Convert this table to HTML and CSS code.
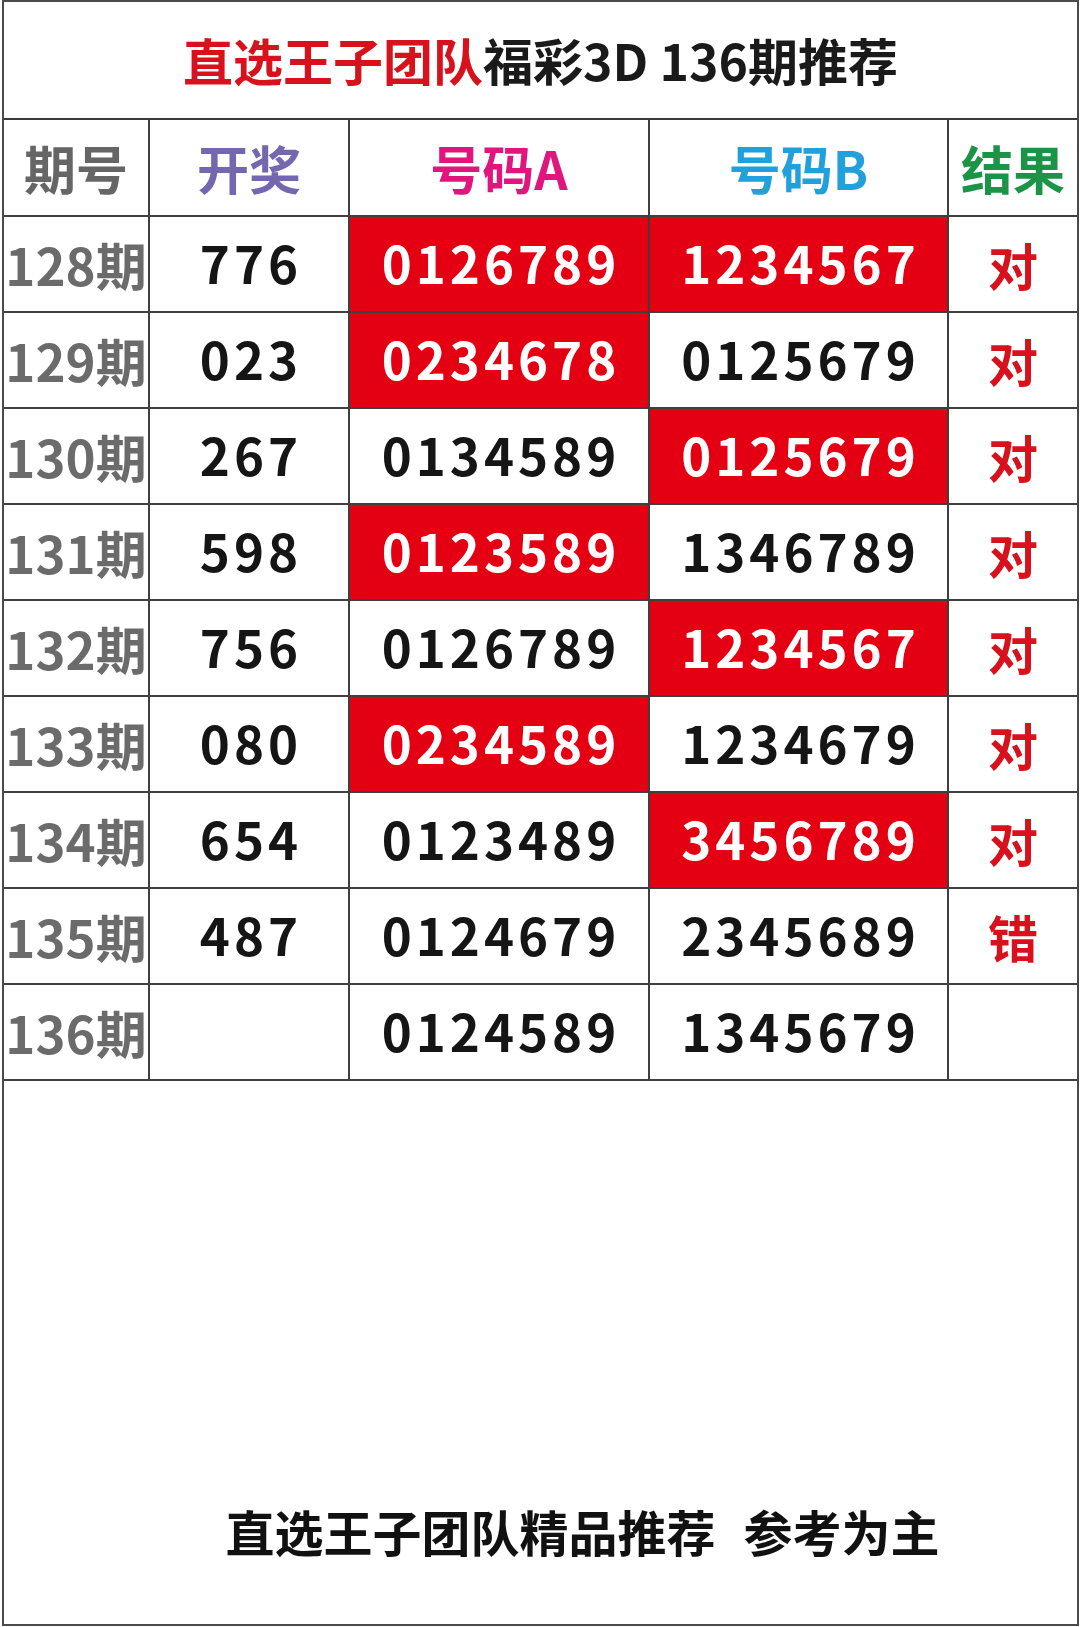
FILE: index.html
```html
<!DOCTYPE html>
<html lang="zh-CN">
<head>
<meta charset="utf-8">
<link rel="stylesheet" href="styles.css">
</head>
<body>
<div class="page">
  <div class="title"><span class="red">直选王子团队</span>福彩3D 136期推荐</div>
  <div class="grid">
    <div class="cell head c-qi">期号</div>
    <div class="cell head c-kj">开奖</div>
    <div class="cell head c-a">号码A</div>
    <div class="cell head c-b">号码B</div>
    <div class="cell head c-jg last">结果</div>

    <div class="cell qi">128期</div><div class="cell num kj">776</div><div class="cell num hit">0126789</div><div class="cell num hit">1234567</div><div class="cell res last">对</div>
    <div class="cell qi">129期</div><div class="cell num kj">023</div><div class="cell num hit">0234678</div><div class="cell num">0125679</div><div class="cell res last">对</div>
    <div class="cell qi">130期</div><div class="cell num kj">267</div><div class="cell num">0134589</div><div class="cell num hit">0125679</div><div class="cell res last">对</div>
    <div class="cell qi">131期</div><div class="cell num kj">598</div><div class="cell num hit">0123589</div><div class="cell num">1346789</div><div class="cell res last">对</div>
    <div class="cell qi">132期</div><div class="cell num kj">756</div><div class="cell num">0126789</div><div class="cell num hit">1234567</div><div class="cell res last">对</div>
    <div class="cell qi">133期</div><div class="cell num kj">080</div><div class="cell num hit">0234589</div><div class="cell num">1234679</div><div class="cell res last">对</div>
    <div class="cell qi">134期</div><div class="cell num kj">654</div><div class="cell num">0123489</div><div class="cell num hit">3456789</div><div class="cell res last">对</div>
    <div class="cell qi">135期</div><div class="cell num kj">487</div><div class="cell num">0124679</div><div class="cell num">2345689</div><div class="cell res last">错</div>
    <div class="cell qi">136期</div><div class="cell num kj"></div><div class="cell num">0124589</div><div class="cell num">1345679</div><div class="cell res last"></div>
  </div>
  <div class="footer"><span>直选王子团队精品推荐</span><span class="gap">参考为主</span></div>
</div>
</body>
</html>
```
FILE: styles.css
```css
html, body {
  margin: 0;
  padding: 0;
  background: #ffffff;
}
body {
  font-family: "Noto Sans CJK SC", "Noto Sans", sans-serif;
  font-weight: 700;
}
.page {
  box-sizing: border-box;
  width: 1077px;
  height: 1626px;
  margin-left: 2px;
  border: 2px solid #4a4a4a;
  display: flex;
  flex-direction: column;
}
.title {
  box-sizing: border-box;
  height: 118px;
  border-bottom: 2px solid #3a3a3a;
  display: flex;
  align-items: center;
  justify-content: center;
  font-size: 50px;
  color: #1a1a1a;
  padding-bottom: 2px;
}
.red {
  color: #d7121d;
}
.grid {
  display: grid;
  grid-template-columns: 146px 200px 300px 299px 1fr;
  grid-template-rows: 97px repeat(9, 96px);
}
.cell {
  box-sizing: border-box;
  border-right: 2px solid #3f3f3f;
  border-bottom: 2px solid #3f3f3f;
  display: flex;
  align-items: center;
  justify-content: center;
  line-height: 1;
}
.cell.last {
  border-right: none;
}
.head {
  font-size: 52px;
}
.c-qi { color: #666666; }
.c-kj { color: #7467b0; }
.c-a { color: #e0167e; }
.c-b { color: #22a0db; }
.c-jg { color: #1b9448; }
.qi {
  font-size: 51px;
  color: #6b6b6b;
}
.num {
  font-size: 51px;
  letter-spacing: 4px;
  color: #151515;
  padding-left: 4px;
  padding-bottom: 4px;
}
.hit {
  background: #e40012;
  color: #ffffff;
}
.res {
  font-size: 50px;
  color: #d7121d;
}
.footer {
  flex: 1;
  display: flex;
  align-items: flex-end;
  justify-content: center;
  padding-left: 84px;
  padding-bottom: 58px;
  font-size: 49px;
  color: #111111;
}
.gap {
  margin-left: 28px;
}
```
